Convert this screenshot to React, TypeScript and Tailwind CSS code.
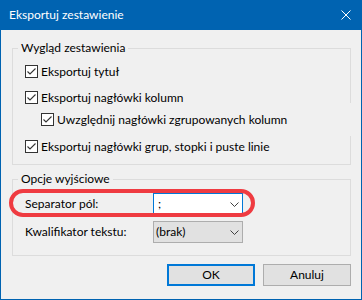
import React from "react";

function Check() {
  return (
    <svg width="13" height="13" viewBox="0 0 13 13" className="shrink-0">
      <rect x="0.5" y="0.5" width="12" height="12" fill="#ffffff" stroke="#333333" />
      <path d="M2.5 6.5 L5 9 L10.5 3.5" fill="none" stroke="#333333" strokeWidth="1.1" />
    </svg>
  );
}

function Chevron() {
  return (
    <svg width="9" height="5" viewBox="0 0 9 5" className="shrink-0">
      <path d="M0.5 0.5 L4.5 4.5 L8.5 0.5" fill="none" stroke="#404040" strokeWidth="1" />
    </svg>
  );
}

function CheckRow({ label, className }: { label: string; className: string }) {
  return (
    <div className={`relative flex items-center h-[15px] gap-[3px] ${className}`}>
      <Check />
      <span className="whitespace-nowrap">{label}</span>
    </div>
  );
}

export default function App() {
  return (
    <div className="relative w-[362px] h-[300px] bg-[#0063b1] flex flex-col px-px pb-px font-[Lato,sans-serif] text-[12px] leading-[16px] text-black">
      <div className="h-[30px] shrink-0 flex items-center justify-between pl-[8px] pr-[10px] text-white">
        <span>Eksportuj zestawienie</span>
        <svg width="10" height="10" viewBox="0 0 10 10">
          <path d="M0.5 0.5 L9.5 9.5 M9.5 0.5 L0.5 9.5" stroke="#ffffff" strokeWidth="1" fill="none" />
        </svg>
      </div>
      <div className="flex-1 bg-[#f0f0f0] flex flex-col pt-[10px] pl-[11px] pr-[10px]">
        <fieldset className="h-[125px] border border-[#dcdcdc] flex flex-col">
          <legend className="ml-[5px] px-[3px]">Wygląd zestawienia</legend>
          <CheckRow label="Eksportuj tytuł" className="mt-[8px] pl-[12px]" />
          <CheckRow label="Eksportuj nagłówki kolumn" className="mt-[11px] pl-[12px]" />
          <div className="relative mt-[7px]">
            <CheckRow label="Uwzględnij nagłówki zgrupowanych kolumn" className="pl-[28px]" />
            <div className="absolute right-[-1px] top-[-9px] w-px h-[33px] bg-[#f0f0f0]" />
          </div>
          <CheckRow label="Eksportuj nagłówki grup, stopki i puste linie" className="mt-[12px] pl-[12px]" />
        </fieldset>
        <fieldset className="mt-[6px] h-[85px] border border-[#dcdcdc] flex flex-col">
          <legend className="ml-[5px] px-[3px]">Opcje wyjściowe</legend>
          <div className="mt-[6px] flex items-center pl-[12px]">
            <span className="w-[128px]">Separator pól:</span>
            <div className="w-[90px] h-[22px] bg-white border border-[#0078d7] flex items-center justify-between pl-[4px] pr-[3px]">
              <span>;</span>
              <Chevron />
            </div>
          </div>
          <div className="mt-[6px] flex items-center pl-[12px]">
            <span className="w-[128px]">Kwalifikator tekstu:</span>
            <div className="w-[90px] h-[22px] bg-[#e1e1e1] border border-[#adadad] flex items-center justify-between pl-[2px] pr-[3px]">
              <span>(brak)</span>
              <Chevron />
            </div>
          </div>
        </fieldset>
        <div className="mt-[8px] flex justify-end gap-[8px]">
          <button className="w-[88px] h-[22px] bg-[#e1e1e1] border-2 border-[#0078d7] flex items-center justify-center">OK</button>
          <button className="w-[88px] h-[22px] bg-[#e1e1e1] border border-[#adadad] flex items-center justify-center">Anuluj</button>
        </div>
      </div>
      <div className="absolute left-[9px] top-[189px] w-[246px] h-[28px] rounded-full border-4 border-[#ef3b41]" />
    </div>
  );
}
